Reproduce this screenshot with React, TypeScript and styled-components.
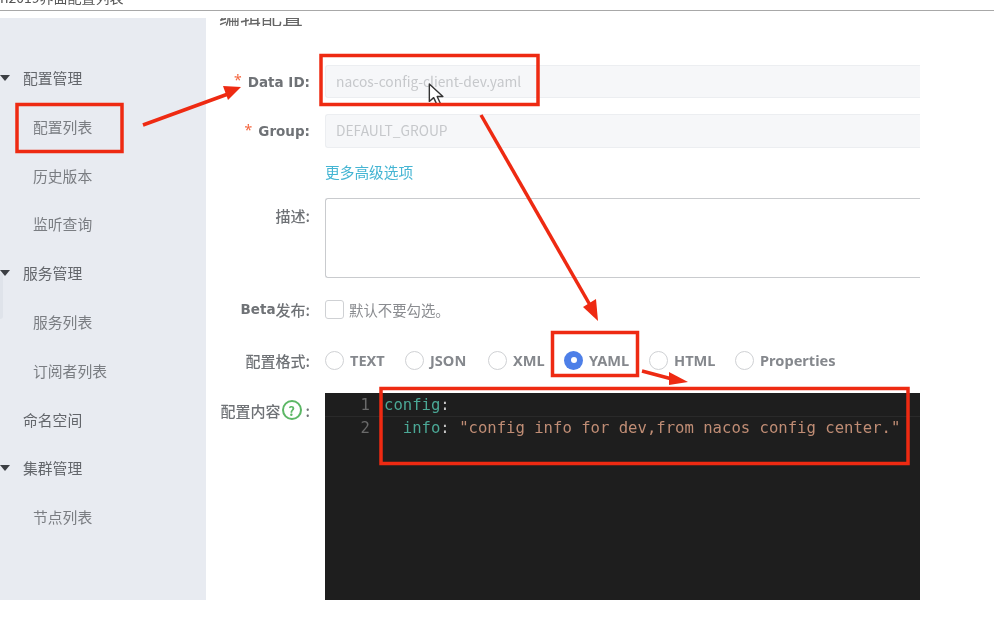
import React, { FC } from 'react'
import styled, { createGlobalStyle } from 'styled-components'

const GlobalStyle = createGlobalStyle`
	html, body {
		margin: 0;
		padding: 0;
		background: #fff;
		overflow: hidden;
	}
	* {
		box-sizing: border-box;
	}
`

const Page = styled.div`
	position: relative;
	width: 994px;
	height: 631px;
	overflow: hidden;
	font-family: 'Noto Sans CJK SC', 'Noto Sans', sans-serif;
	background: #fff;
	filter: blur(0.45px);
`

const TopBar = styled.div`
	height: 11px;
	border-bottom: 1px solid #a8a8a8;
	overflow: hidden;
`

const TopBarText = styled.div`
	margin-top: -11px;
	font-size: 14px;
	line-height: 16px;
	color: #555;
	white-space: nowrap;
`

const Body = styled.div`
	display: flex;
	align-items: flex-start;
`

const Sidebar = styled.nav`
	position: relative;
	width: 206px;
	height: 582px;
	margin-top: 7px;
	padding-top: 36px;
	background: #e8ebf1;
`

const SideTab = styled.div`
	position: absolute;
	left: 0;
	top: 255px;
	width: 3px;
	height: 46px;
	border-radius: 0 3px 3px 0;
	background: #dfe3ea;
`

const NavRow = styled.div<{ $sub?: boolean }>`
	position: relative;
	height: 48.8px;
	padding-left: ${(p) => (p.$sub ? '33px' : '23px')};
	font-size: 14.8px;
	line-height: 48.8px;
	color: ${(p) => (p.$sub ? '#7a7d82' : '#63666b')};
`

const Caret = styled.span`
	position: absolute;
	left: 0;
	top: 21px;
	width: 0;
	height: 0;
	border-left: 5px solid transparent;
	border-right: 5px solid transparent;
	border-top: 6px solid #3c3f44;
`

const Main = styled.main`
	width: 714px;
	padding-left: 13px;
	color: #666;
`

const Heading = styled.h2`
	height: 8px;
	margin: 7px 0 0;
	overflow: hidden;
	font-size: 21px;
	font-weight: 400;
	line-height: 24px;
	color: #666;
`

const HeadingText = styled.div`
	margin-top: -15px;
`

const Form = styled.div`
	display: grid;
	grid-template-columns: 91px 1fr;
	column-gap: 15px;
	margin-top: 39px;
`

const Label = styled.label<{ $h: number; $top?: number }>`
	display: flex;
	align-items: center;
	justify-content: flex-end;
	height: ${(p) => p.$h}px;
	margin-top: ${(p) => p.$top ?? 0}px;
	font-family: 'DejaVu Sans', sans-serif;
	font-size: 13.5px;
	font-weight: 700;
	color: #6f7276;
	white-space: nowrap;
`

const CnLabel = styled(Label)`
	font-family: 'Noto Sans CJK SC', 'Noto Sans', sans-serif;
	font-weight: 500;
	font-size: 15px;
`

const BetaLatin = styled.span`
	font-family: 'DejaVu Sans', sans-serif;
	font-size: 13.5px;
	font-weight: 700;
`

const Required = styled.span`
	margin-right: 6px;
	margin-top: -4px;
	font-family: 'Noto Sans', sans-serif;
	font-size: 14px;
	font-weight: 400;
	color: #f4663f;
`

const Field = styled.div<{ $h: number; $top?: number }>`
	display: flex;
	align-items: center;
	height: ${(p) => p.$h}px;
	margin-top: ${(p) => p.$top ?? 0}px;
`

const DisabledInput = styled.div`
	width: 100%;
	height: 100%;
	padding-left: 10px;
	border: 1px solid #eceef1;
	border-right: none;
	border-radius: 3px 0 0 3px;
	background: #f6f7f9;
	font-size: 13.8px;
	line-height: 31px;
	color: #c6c8cb;
`

const MoreLink = styled.a`
	font-size: 14.7px;
	color: #45b5d3;
`

const TextArea = styled.div`
	width: 100%;
	height: 100%;
	border: 1px solid #c9cbce;
	border-right: none;
	border-radius: 3px 0 0 3px;
	background: #fff;
`

const CheckBox = styled.span`
	width: 19px;
	height: 19px;
	border: 1px solid #cfd1d4;
	border-radius: 3px;
	background: #fff;
`

const Hint = styled.span`
	margin-left: 5px;
	font-size: 14.4px;
	color: #8a8c90;
`

const RadioGroup = styled.div`
	display: flex;
	align-items: center;
`

const RadioItem = styled.div<{ $w: number }>`
	display: flex;
	align-items: center;
	width: ${(p) => p.$w}px;
	font-family: 'Noto Sans', sans-serif;
	font-size: 14.6px;
	font-weight: 700;
	color: #85888d;
`

const RadioDot = styled.span<{ $on?: boolean }>`
	display: flex;
	align-items: center;
	justify-content: center;
	width: 19px;
	height: 19px;
	margin-right: 6px;
	border-radius: 50%;
	border: ${(p) => (p.$on ? 'none' : '1px solid #cfd1d4')};
	background: ${(p) => (p.$on ? '#4d7fe8' : '#fff')};

	&::after {
		content: '';
		width: 6px;
		height: 6px;
		border-radius: 50%;
		background: ${(p) => (p.$on ? '#fff' : 'transparent')};
	}
`

const HelpIcon = styled.span`
	display: inline-flex;
	align-items: center;
	justify-content: center;
	width: 20px;
	height: 20px;
	margin: 0 4px 0 1px;
	border: 2px solid #5cb765;
	border-radius: 50%;
	font-size: 13px;
	font-weight: 700;
	color: #5cb765;
`

const Editor = styled.div`
	position: relative;
	width: 100%;
	height: 207px;
	padding-top: 1px;
	background: #1e1e1e;
	font-family: 'DejaVu Sans Mono', 'Liberation Mono', monospace;
	font-size: 15.6px;
	line-height: 23px;
`

const CodeLine = styled.div<{ $active?: boolean }>`
	display: flex;
	white-space: pre;
	height: 23px;
	border-bottom: ${(p) => (p.$active ? '1px solid #2a2a2a' : 'none')};
`

const LineNo = styled.span`
	width: 46px;
	padding-right: 1px;
	text-align: right;
	color: #6a6a6a;
	margin-right: 13px;
`

const Key = styled.span`
	color: #4ba896;
`

const Punct = styled.span`
	color: #c8c8c8;
`

const Str = styled.span`
	color: #c08d75;
`

const Annotations = styled.svg`
	position: absolute;
	left: 0;
	top: 0;
	pointer-events: none;
`

const Cursor = styled.svg`
	position: absolute;
	left: 427px;
	top: 83px;
`

const RED = '#ee2a12'

const boxes = [
	{ x: 17, y: 104.5, w: 105, h: 47 },
	{ x: 321, y: 55.5, w: 217, h: 49 },
	{ x: 552.5, y: 332.5, w: 85, h: 43 },
	{ x: 381, y: 388.5, w: 527, h: 75 },
]

const navItems = [
	{ label: '配置管理', caret: true },
	{ label: '配置列表', sub: true },
	{ label: '历史版本', sub: true },
	{ label: '监听查询', sub: true },
	{ label: '服务管理', caret: true },
	{ label: '服务列表', sub: true },
	{ label: '订阅者列表', sub: true },
	{ label: '命名空间' },
	{ label: '集群管理', caret: true },
	{ label: '节点列表', sub: true },
]

const formats = [
	{ label: 'TEXT', w: 80 },
	{ label: 'JSON', w: 83 },
	{ label: 'XML', w: 76 },
	{ label: 'YAML', w: 85, on: true },
	{ label: 'HTML', w: 86 },
	{ label: 'Properties', w: 110 },
]

const App: FC = () => {
	return (
		<Page>
			<GlobalStyle />
			<TopBar>
				<TopBarText>n2019界面配置列表</TopBarText>
			</TopBar>
			<Body>
				<Sidebar>
					<SideTab />
					{navItems.map((item) => (
						<NavRow key={item.label} $sub={item.sub}>
							{item.caret && <Caret />}
							{item.label}
						</NavRow>
					))}
				</Sidebar>
				<Main>
					<Heading>
						<HeadingText>编辑配置</HeadingText>
					</Heading>
					<Form>
						<Label $h={33}>
							<Required>*</Required>Data ID:
						</Label>
						<Field $h={33}>
							<DisabledInput>nacos-config-client-dev.yaml</DisabledInput>
						</Field>

						<Label $h={34} $top={16}>
							<Required>*</Required>Group:
						</Label>
						<Field $h={34} $top={16}>
							<DisabledInput>DEFAULT_GROUP</DisabledInput>
						</Field>

						<span />
						<Field $h={24} $top={11}>
							<MoreLink>更多高级选项</MoreLink>
						</Field>

						<CnLabel $h={34} $top={15}>描述:</CnLabel>
						<Field $h={80} $top={15}>
							<TextArea />
						</Field>

						<CnLabel $h={24} $top={19}>
							<BetaLatin>Beta</BetaLatin>发布:
						</CnLabel>
						<Field $h={24} $top={19}>
							<CheckBox />
							<Hint>默认不要勾选。</Hint>
						</Field>

						<CnLabel $h={24} $top={27}>配置格式:</CnLabel>
						<Field $h={24} $top={27}>
							<RadioGroup>
								{formats.map((f) => (
									<RadioItem key={f.label} $w={f.w}>
										<RadioDot $on={f.on} />
										{f.label}
									</RadioItem>
								))}
							</RadioGroup>
						</Field>

						<CnLabel $h={34} $top={21}>
							配置内容<HelpIcon>?</HelpIcon>:
						</CnLabel>
						<Field $h={207} $top={21}>
							<Editor>
								<CodeLine $active>
									<LineNo>1</LineNo>
									<Key>config</Key>
									<Punct>:</Punct>
								</CodeLine>
								<CodeLine>
									<LineNo>2</LineNo>
									<Key>  info</Key>
									<Punct>: </Punct>
									<Str>"config info for dev,from nacos config center."</Str>
								</CodeLine>
							</Editor>
						</Field>
					</Form>
				</Main>
			</Body>
			<Cursor width="22" height="26" viewBox="0 0 20 24">
				<path d="M2 1 L2 17 L6 13.5 L9 20 L12 18.5 L9.2 12.5 L14.5 12.5 Z" fill="#fff" stroke="#333" strokeWidth="1.3" strokeLinejoin="round" />
			</Cursor>
			<Annotations width="994" height="631" viewBox="0 0 994 631">
				{boxes.map((b) => (
					<rect key={b.x} x={b.x} y={b.y} width={b.w} height={b.h} fill="none" stroke={RED} strokeWidth="3.5" />
				))}
				<path d="M143 125 L228 94" stroke={RED} strokeWidth="3.5" />
				<path d="M223 86 L241 87 L228 100 Z" fill={RED} />
				<path d="M481 115 L590 305" stroke={RED} strokeWidth="3.5" />
				<path d="M583 307 L596 299 L598 321 Z" fill={RED} />
				<path d="M642 371 L672 379" stroke={RED} strokeWidth="3.5" />
				<path d="M669 372 L688 382 L669 385 Z" fill={RED} />
			</Annotations>
		</Page>
	)
}

export default App
